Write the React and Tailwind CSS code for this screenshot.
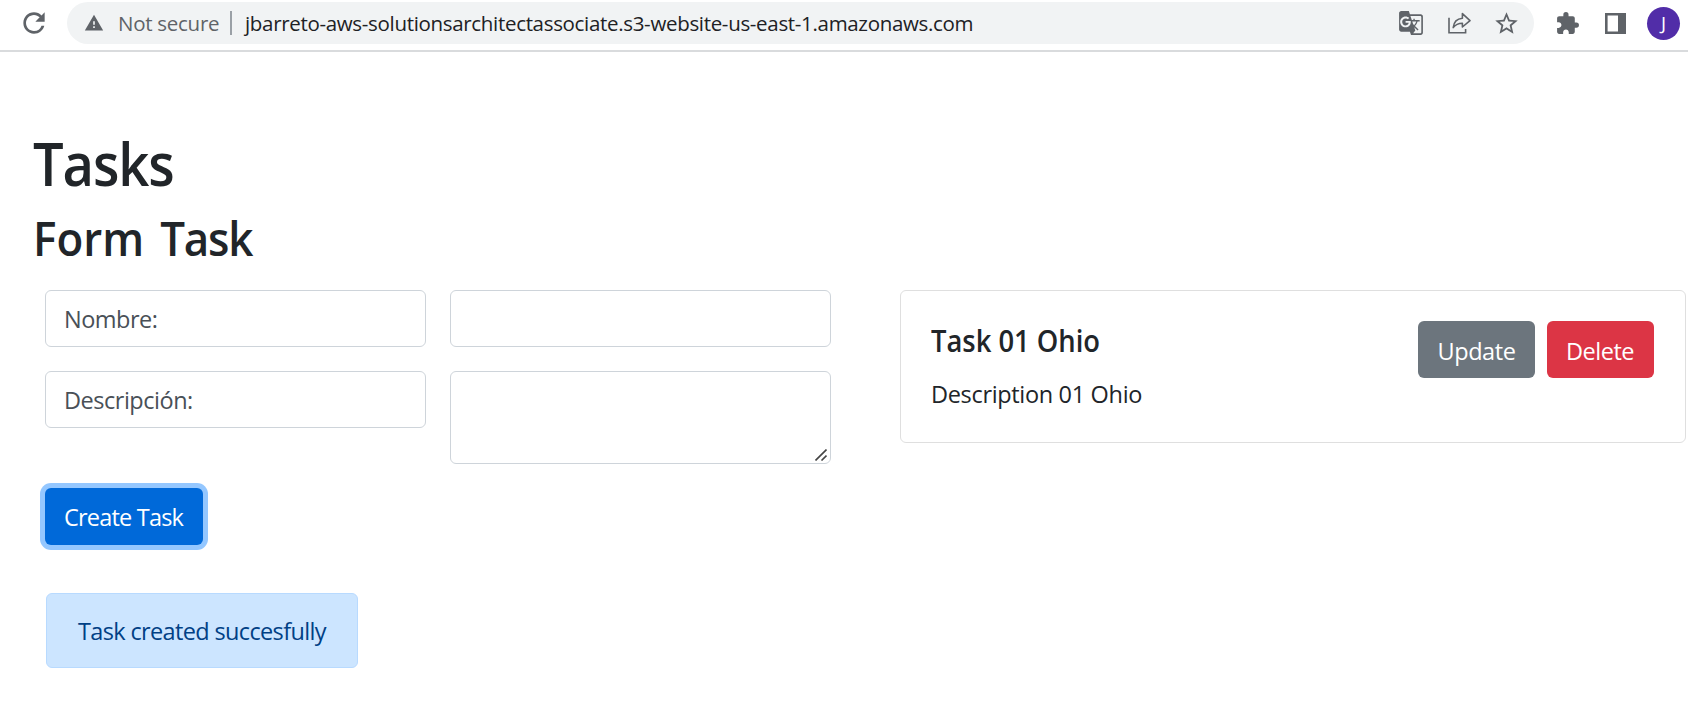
import { MdRefresh, MdWarning, MdGTranslate, MdStarBorder, MdExtension } from "react-icons/md";

function ShareIcon() {
  return (
    <svg className="h-[22px] w-[23px]" viewBox="0 0 23 22" fill="none" stroke="currentColor" strokeWidth="1.6">
      <path d="M1 5.8V20.8H17.6V17" />
      <path d="M5.2 15.6C5.8 9.8 9 6.6 14.4 6.2V1.6L22 8.6L14.4 15V11.2C10.4 11.2 7.6 12.4 5.2 15.6Z" strokeLinejoin="round" />
    </svg>
  );
}

function SidePanelIcon() {
  return (
    <svg className="h-[21px] w-[21px]" viewBox="0 0 21 21" fill="currentColor">
      <path fillRule="evenodd" d="M0 0H21V21H0ZM2.6 2.6V18.4H13V2.6Z" />
    </svg>
  );
}

function BrowserBar() {
  return (
    <header className="flex h-[52px] items-start border-b-2 border-[#d9dbdd] pt-0.5 text-[#5f6368]">
      <div className="flex h-[42px] w-[67px] items-center pl-[18px]">
        <MdRefresh className="size-[32px]" />
      </div>
      <div className="flex h-[42px] w-[1467px] items-center rounded-full bg-[#f1f3f4] pl-[17px] text-[20.5px] leading-[30px]">
        <MdWarning className="size-5 shrink-0" />
        <span className="w-[112px] pl-[14px] tracking-[-0.27px] whitespace-nowrap">Not secure</span>
        <span className="ml-[14px] h-6 w-0.5 bg-[#9aa0a6]" />
        <span className="ml-[13px] grow tracking-[-0.32px] whitespace-nowrap text-[#202124]">
          jbarreto-aws-solutionsarchitectassociate.s3-website-us-east-1.amazonaws.com
        </span>
        <div className="flex items-center pr-[14px]">
          <MdGTranslate className="size-[26px]" />
          <span className="ml-6 flex"><ShareIcon /></span>
          <MdStarBorder className="ml-[22px] size-[27px]" />
        </div>
      </div>
      <div className="flex h-[42px] grow items-center justify-end pr-2">
        <MdExtension className="size-[25px]" />
        <span className="ml-[25px] flex"><SidePanelIcon /></span>
        <span className="ml-[21px] flex size-[33px] items-center justify-center rounded-full bg-[#512da8] text-[19px] leading-none text-white">
          J
        </span>
      </div>
    </header>
  );
}

function FormTask() {
  return (
    <form className="flex w-[786px] flex-col pl-[9px]" onSubmit={(e) => e.preventDefault()}>
      <div className="grid grid-cols-[381px_381px] items-start gap-6 text-[#495057]">
        <label className="h-[57px] rounded-md border border-[#ced4da] px-[18px] py-[10px] tracking-[-0.5px]">Nombre:</label>
        <input aria-label="Nombre" className="h-[57px] rounded-md border border-[#ced4da] px-[18px]" />
        <label className="h-[57px] rounded-md border border-[#ced4da] px-[18px] py-[10px] tracking-[-0.48px]">Descripción:</label>
        <div className="relative h-[93px]">
          <textarea aria-label="Descripción" className="block h-[93px] w-full resize-none rounded-md border border-[#ced4da] px-[18px] py-[9px]" />
          <svg className="absolute right-1 bottom-[3px] size-3" viewBox="0 0 12 12" stroke="#444" strokeWidth="1.6">
            <path d="M0.5 11.5L11.5 0.5M6.5 11.5L11.5 6.5" />
          </svg>
        </div>
      </div>
      <button className="mt-6 h-[57px] w-[158px] rounded-md bg-[#0069d9] pl-[19px] text-left tracking-[-0.8px] whitespace-nowrap text-white ring-[5px] ring-[#94c7ff]">
        Create Task
      </button>
      <div className="mt-12 ml-px h-[75px] w-[312px] rounded-md border border-[#b8daff] bg-[#cce5ff] px-[31px] py-[19px] tracking-[-0.64px] whitespace-nowrap text-[#004085]">
        Task created succesfully
      </div>
    </form>
  );
}

function TaskCard() {
  return (
    <section className="ml-[78px] flex h-[153px] w-[786px] justify-between rounded-md border border-[#dfdfdf] pt-[30px] pr-[31px] pl-[30px]">
      <div>
        <h5 className="mt-0.5 h-9 origin-left scale-x-[0.912] text-[30px] leading-9 font-semibold whitespace-nowrap">Task 01 Ohio</h5>
        <p className="mt-[17px] tracking-[-0.33px] whitespace-nowrap">Description 01 Ohio</p>
      </div>
      <div className="flex gap-3 text-white">
        <button className="h-[57px] w-[117px] rounded-md bg-[#6c757d] pt-0.5 tracking-[-0.45px]">Update</button>
        <button className="h-[57px] w-[107px] rounded-md bg-[#dc3545] pt-0.5 pr-px tracking-[-0.5px]">Delete</button>
      </div>
    </section>
  );
}

export default function App() {
  return (
    <div className="h-[718px] overflow-hidden bg-white font-['Open_Sans','Noto_Sans',sans-serif] text-[23.5px] leading-9 text-[#212529]">
      <BrowserBar />
      <main className="pt-[75px] pl-9">
        <h1 className="-ml-[3px] w-fit origin-left scale-x-[0.92] text-[59px] leading-[72px] font-semibold tracking-[-1.2px]">Tasks</h1>
        <h2 className="mt-[10px] -ml-[3px] w-fit origin-left scale-x-[0.925] text-[47.5px] leading-[58px] font-semibold [word-spacing:5px]">
          Form <span className="tracking-[-1.3px]">Task</span>
        </h2>
        <div className="mt-[23px] flex items-start">
          <FormTask />
          <TaskCard />
        </div>
      </main>
    </div>
  );
}
